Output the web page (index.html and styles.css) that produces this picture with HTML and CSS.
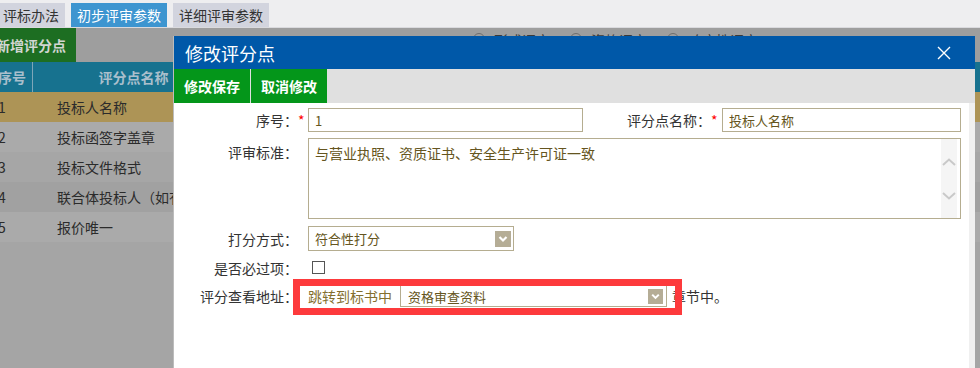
FILE: index.html
```html
<!DOCTYPE html>
<html lang="zh-CN">
<head>
    <meta charset="UTF-8">
    <title>修改评分点</title>
    <link rel="stylesheet" href="styles.css">
</head>
<body>
    <div class="tabs">
        <span class="tab tab-first">评标办法</span>
        <span class="tab active">初步评审参数</span>
        <span class="tab">详细评审参数</span>
    </div>

    <div class="content">
        <div class="content-bar">
            <span class="btn-add">新增评分点</span>
            <div class="radios">
                <label class="radio"><span class="circle"></span>形式评审</label>
                <label class="radio"><span class="circle"></span>资格评审</label>
                <label class="radio"><span class="circle"></span>响应性评审</label>
            </div>
        </div>
        <table class="grid">
            <thead>
                <tr>
                    <th class="col-no">序号</th>
                    <th class="col-name">评分点名称</th>
                    <th></th>
                </tr>
            </thead>
            <tbody>
                <tr class="selected"><td class="col-no">1</td><td class="col-name">投标人名称</td><td></td></tr>
                <tr class="light"><td class="col-no">2</td><td class="col-name">投标函签字盖章</td><td></td></tr>
                <tr class="mid"><td class="col-no">3</td><td class="col-name">投标文件格式</td><td></td></tr>
                <tr class="dark"><td class="col-no">4</td><td class="col-name">联合体投标人（如有）</td><td></td></tr>
                <tr class="light"><td class="col-no">5</td><td class="col-name">报价唯一</td><td></td></tr>
            </tbody>
        </table>
    </div>

    <div class="modal">
        <div class="modal-header">
            <span class="modal-title">修改评分点</span>
            <svg class="modal-close" width="14" height="14" viewBox="0 0 14 14">
                <path d="M1 1L13 13M13 1L1 13" stroke="#fff" stroke-width="1.4" fill="none"/>
            </svg>
        </div>
        <div class="modal-toolbar">
            <span class="tool-btn">修改保存</span>
            <span class="tool-btn">取消修改</span>
        </div>
        <div class="modal-body">
            <div class="form-row row-1">
                <span class="label">序号：</span><span class="req">*</span>
                <input class="input input-no" type="text" value="1">
                <span class="label label-wide">评分点名称：</span><span class="req req-wide">*</span>
                <input class="input input-name" type="text" value="投标人名称">
            </div>
            <div class="form-row row-2">
                <span class="label">评审标准：</span><span class="req"></span>
                <div class="textarea">
                    <div class="textarea-text">与营业执照、资质证书、安全生产许可证一致</div>
                    <div class="textarea-scroll">
                        <svg width="14" height="8" viewBox="0 0 14 8"><path d="M1 7L7 1.5L13 7" stroke="#c9c9c9" stroke-width="2" fill="none"/></svg>
                        <svg width="14" height="8" viewBox="0 0 14 8"><path d="M1 1L7 6.5L13 1" stroke="#c9c9c9" stroke-width="2" fill="none"/></svg>
                    </div>
                </div>
            </div>
            <div class="form-row row-3">
                <span class="label">打分方式：</span><span class="req"></span>
                <div class="select select-mode">
                    <span>符合性打分</span>
                    <span class="select-arrow">
                        <svg width="16" height="16" viewBox="0 0 16 16"><path d="M4.5 6L8 9.5L11.5 6" stroke="#fff" stroke-width="2.2" fill="none"/></svg>
                    </span>
                </div>
            </div>
            <div class="form-row row-4">
                <span class="label">是否必过项：</span><span class="req"></span>
                <span class="checkbox"></span>
            </div>
            <div class="form-row row-5">
                <span class="label">评分查看地址：</span><span class="req"></span>
                <div class="address">
                    <span class="address-prefix">跳转到标书中</span>
                    <div class="select select-chapter">
                        <span>资格审查资料</span>
                        <span class="select-arrow">
                            <svg width="15" height="15" viewBox="0 0 16 16"><path d="M4.5 6L8 9.5L11.5 6" stroke="#fff" stroke-width="2.2" fill="none"/></svg>
                        </span>
                    </div>
                    <span class="address-suffix">章节中。</span>
                    <div class="highlight"></div>
                </div>
            </div>
        </div>
    </div>
</body>
</html>
```

FILE: styles.css
```css
:root {
    --overlay: #a5a5a5;
    --modal-blue: #0058a8;
    --tool-green: #04961a;
    --field-border: #b5ad90;
    --field-text: #655520;
    --label-text: #333333;
}

* {
    box-sizing: border-box;
}

body, html {
    margin: 0;
    padding: 0;
    width: 100%;
    height: 100%;
    overflow: hidden;
}

body {
    font-family: "Noto Sans CJK SC", "Microsoft YaHei", sans-serif;
    font-size: 14px;
    color: var(--label-text);
    background-color: var(--overlay);
    position: relative;
}

/* 顶部页签 */
.tabs {
    height: 28px;
    background-color: #eeeef0;
    border-bottom: 1px solid #dadade;
    display: flex;
    align-items: flex-start;
    gap: 6px;
    padding-top: 3px;
}

.tab {
    height: 24px;
    line-height: 24px;
    padding: 0 6px;
    background-color: #d2d4de;
    color: #333;
    white-space: nowrap;
}

.tab-first {
    margin-left: -3px;
}

.tab.active {
    background-color: #3d95d0;
    color: #fff;
}

/* 背景列表 (被遮罩) */
.content-bar {
    height: 34px;
    background-color: #9e9e9e;
    display: flex;
    align-items: flex-start;
}

.btn-add {
    height: 34px;
    line-height: 34px;
    padding: 0 10px;
    margin-left: -14px;
    background-color: #1d6e22;
    color: #d2d6d2;
    font-weight: 700;
    white-space: nowrap;
}

.radios {
    display: flex;
    margin-left: 397px;
    padding-top: 5px;
}

.radio {
    display: flex;
    align-items: flex-start;
    margin-right: 20px;
    line-height: 14px;
    color: #3a3a3a;
    white-space: nowrap;
    min-width: 77px;
}

.circle {
    width: 12px;
    height: 12px;
    border: 1px solid #6e6e6e;
    border-radius: 50%;
    margin-right: 9px;
}

.grid {
    width: calc(100% + 6px);
    margin-left: -6px;
    border-collapse: collapse;
}

.grid th, .grid td {
    height: 30px;
    padding: 0;
    text-align: left;
    white-space: nowrap;
    font-weight: normal;
}

.grid thead tr {
    background-color: #17728f;
    color: #a9bfcc;
}

.grid th {
    font-weight: 700;
}

.grid .col-no {
    width: 38px;
    padding-left: 4px;
}

.grid th.col-no {
    border-right: 1px solid #7ea6b8;
}

.grid th.col-name {
    width: 202px;
    padding-left: 66px;
}

.grid td.col-name {
    padding-left: 25px;
    color: #2b2b2b;
}

.grid td {
    color: #2b2b2b;
}

.grid tr.selected { background-color: #ad9456; }
.grid tr.light { background-color: #aaaaaa; }
.grid tr.mid { background-color: #a6a6a6; }
.grid tr.dark { background-color: #a1a1a1; }

/* 弹出窗口 */
.modal {
    position: absolute;
    left: 173px;
    top: 36px;
    width: 802px;
    height: 340px;
    background-color: #fff;
    border-left: 1px solid #bcbcbc;
    display: flex;
    flex-direction: column;
}

.modal-header {
    height: 33px;
    background-color: var(--modal-blue);
    display: flex;
    align-items: center;
    justify-content: space-between;
    padding: 0 24px 0 11px;
}

.modal-title {
    color: #fff;
    font-size: 18px;
}

.modal-toolbar {
    height: 34px;
    background-color: #e0e0e0;
    display: flex;
    gap: 1px;
}

.tool-btn {
    width: 76px;
    line-height: 34px;
    text-align: center;
    background-color: var(--tool-green);
    color: #fff;
    font-weight: 700;
}

.modal-body {
    flex: 1;
    border-right: 6px solid #f0f0f0;
    padding-top: 5px;
}

.form-row {
    display: flex;
    align-items: center;
}

.label {
    width: 124px;
    text-align: right;
    white-space: nowrap;
}

.label-wide {
    width: 128px;
}

.req {
    width: 10px;
    color: #f00;
    line-height: 14px;
}

.req-wide {
    width: 11px;
}

.input {
    height: 24px;
    border: 1px solid var(--field-border);
    padding: 0 6px;
    font-family: inherit;
    font-size: 13px;
    color: var(--field-text);
    outline: none;
}

.input-no {
    width: 275px;
}

.input-name {
    width: 239px;
}

.row-2 {
    margin-top: 6px;
    align-items: flex-start;
}

.row-2 .label {
    line-height: 20px;
    padding-top: 4px;
}

.textarea {
    width: 653px;
    height: 81px;
    border: 1px solid var(--field-border);
    display: flex;
}

.textarea-text {
    flex: 1;
    padding: 4px 6px;
    line-height: 20px;
    color: var(--field-text);
}

.textarea-scroll {
    width: 16px;
    margin: 0 3px 0 0;
    background-color: #f5f5f5;
    display: flex;
    flex-direction: column;
    align-items: center;
    justify-content: space-between;
    padding: 19px 0 18px;
}

.row-3 {
    margin-top: 7px;
}

.select {
    border: 1px solid var(--field-border);
    display: flex;
    align-items: center;
    justify-content: space-between;
    font-size: 13px;
    color: var(--field-text);
    background-color: #fff;
}

.select-mode {
    width: 206px;
    height: 25px;
    padding: 0 2px 0 6px;
}

.select-arrow {
    display: flex;
    background-color: #b5ad96;
}

.row-4 {
    margin-top: 10px;
    height: 13px;
}

.checkbox {
    width: 13px;
    height: 13px;
    border: 1px solid #555;
    margin-left: 4px;
}

.row-5 {
    margin-top: 11px;
}

.address {
    position: relative;
    display: flex;
    align-items: center;
    height: 22px;
}

.address-prefix {
    width: 92px;
    color: #846f2e;
    white-space: nowrap;
}

.select-chapter {
    width: 267px;
    height: 22px;
    padding: 0 3px 0 7px;
}

.address-suffix {
    margin-left: 5px;
    white-space: nowrap;
}

/* 红色标注框 */
.highlight {
    position: absolute;
    left: -15px;
    top: -6px;
    width: 389px;
    height: 36px;
    border: 7px solid #fd3a3c;
}
```
